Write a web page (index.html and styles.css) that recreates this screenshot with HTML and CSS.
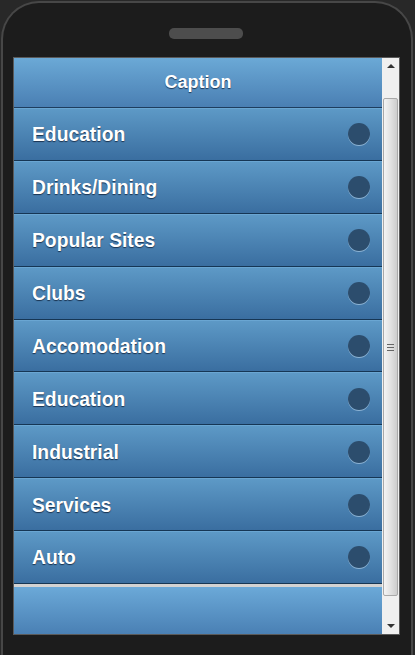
FILE: index.html
```html
<!DOCTYPE html>
<html>
<head>
    <meta charset="UTF-8">
    <link rel="stylesheet" href="styles.css">
</head>
<body>
    <div class="phone">
        <div class="speaker"></div>
        <div class="screen">
            <div class="list">
                <div class="caption">Caption</div>
                <div class="item"><span>Education</span><i class="dot"></i></div>
                <div class="item"><span>Drinks/Dining</span><i class="dot"></i></div>
                <div class="item"><span>Popular Sites</span><i class="dot"></i></div>
                <div class="item"><span>Clubs</span><i class="dot"></i></div>
                <div class="item"><span>Accomodation</span><i class="dot"></i></div>
                <div class="item"><span>Education</span><i class="dot"></i></div>
                <div class="item"><span>Industrial</span><i class="dot"></i></div>
                <div class="item"><span>Services</span><i class="dot"></i></div>
                <div class="item"><span>Auto</span><i class="dot"></i></div>
                <div class="gap"></div>
                <div class="footer"></div>
            </div>
            <div class="scrollbar">
                <div class="arrow up"></div>
                <div class="track">
                    <div class="thumb"><div class="grip"></div></div>
                </div>
                <div class="arrow down"></div>
            </div>
        </div>
    </div>
</body>
</html>
```

FILE: styles.css
```css
body {
    margin: 0;
    background-color: #282828;
    font-family: "Liberation Sans", Arial, sans-serif;
    height: 655px;
    overflow: hidden;
}
.phone {
    margin: 1px 0 0 1px;
    width: 408px;
    height: 652px;
    border: 2px solid #474747;
    border-bottom: none;
    border-radius: 38px 38px 0 0;
    background-color: #1c1c1c;
    display: flex;
    flex-direction: column;
    align-items: flex-start;
}
.speaker {
    width: 74px;
    height: 11px;
    margin: 25px 0 0 166px;
    border-radius: 5px;
    background-color: #4d4d4d;
}
.screen {
    margin: 18px 0 0 10px;
    width: 385px;
    height: 576px;
    border: 1px solid #5a5a5a;
    display: flex;
}
.list {
    width: 368px;
    display: flex;
    flex-direction: column;
}
.caption {
    height: 49px;
    border-bottom: 1px solid #1e3d5e;
    background: linear-gradient(#6ba9d6, #4a7fb3);
    color: #fff;
    font-size: 18px;
    font-weight: bold;
    text-align: center;
    line-height: 48px;
    text-shadow: 0 1px 1px #1d3857;
}
.item {
    height: 50.89px;
    flex-shrink: 0;
    border-top: 1px solid #6aa6d2;
    border-bottom: 1px solid #163654;
    background: linear-gradient(#5d99c6, #3a6ea0);
    display: flex;
    align-items: center;
    justify-content: space-between;
    padding: 0 12px 0 18px;
    color: #fff;
    font-size: 19.3px;
    font-weight: bold;
    text-shadow: 0 1px 1px #1a3350;
}
.item span {
    padding-top: 2px;
}
.dot {
    width: 22px;
    height: 22px;
    border-radius: 50%;
    background-color: #2c4d6d;
    box-shadow: 0 1px 0 rgba(200, 225, 245, 0.55);
}
.gap {
    height: 3px;
    background-color: #d2d2d2;
}
.footer {
    flex: 1;
    background: linear-gradient(#6ba9d8, #4a80b4);
}
.scrollbar {
    width: 17px;
    background-color: #f0f0f0;
    display: flex;
    flex-direction: column;
}
.arrow {
    height: 17px;
    display: flex;
    align-items: center;
    justify-content: center;
}
.arrow::before {
    content: "";
    border-left: 4px solid transparent;
    border-right: 4px solid transparent;
}
.up::before {
    border-bottom: 4px solid #333;
    margin-bottom: 1px;
}
.down::before {
    border-top: 4px solid #333;
    margin-top: 1px;
}
.track {
    flex: 1;
    padding: 23px 1px 0 1px;
}
.thumb {
    height: 496px;
    border: 1px solid #a9a9a9;
    border-radius: 2px;
    background: linear-gradient(to right, #f4f4f4, #e2e2e2 50%, #cdcdcd);
    display: flex;
    align-items: center;
    justify-content: center;
}
.grip {
    width: 7px;
    height: 5px;
    border-top: 1px solid #666;
    border-bottom: 1px solid #666;
    background: linear-gradient(transparent 2px, #666 2px, #666 3px, transparent 3px);
}
```
